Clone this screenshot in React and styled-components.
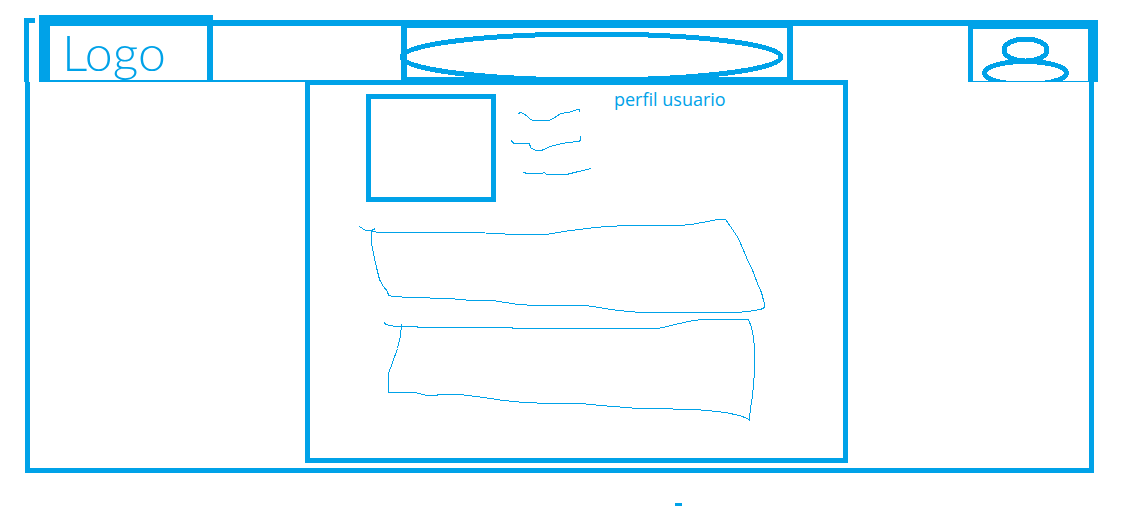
import React from "react";
import styled, { createGlobalStyle } from "styled-components";

const INK = "#00a2e8";

const GlobalStyle = createGlobalStyle`
  *, *::before, *::after { box-sizing: border-box; }
  body {
    margin: 0;
    background: #fff;
    color: ${INK};
    font-family: "Open Sans", "Noto Sans", sans-serif;
  }
`;

const Page = styled.div`
  padding: 15px 30px 0 24px;
`;

const TopRow = styled.div`
  display: flex;
  gap: 4px;
  height: 67px;
`;

const Corner = styled.div`
  width: 11px;
  margin-top: 3px;
  border: solid ${INK};
  border-width: 5px 0 0 5px;
`;

const Header = styled.header`
  flex: 1;
  display: grid;
  grid-template-columns: 174px 188fr 392fr 175fr 130px;
  align-items: start;
`;

const LogoLink = styled.a`
  display: block;
  height: 67px;
  padding-left: 12px;
  border: solid ${INK};
  border-width: 11px 6px 2px 11px;
  color: ${INK};
  font-family: Lato, sans-serif;
  font-size: 50px;
  font-weight: 300;
  line-height: 52px;
  text-decoration: none;
`;

const Rail = styled.div`
  height: 62px;
  margin-top: 5px;
  border: solid ${INK};
  border-width: 6px 0 ${(p) => (p.$underlined ? "2px" : "0")};
`;

const SearchBox = styled.form`
  height: 65px;
  margin-top: 5px;
  border: solid ${INK};
  border-width: 8px 6px;
  display: grid;
`;

const Oval = styled.svg`
  grid-area: 1 / 1;
  width: calc(100% + 3px);
  height: 50px;
  margin: 4px 0 0 -7px;
  overflow: visible;

  ellipse {
    rx: calc(50% - 2px);
    ry: 23px;
    fill: none;
    stroke: ${INK};
    stroke-width: 5px;
    shape-rendering: crispEdges;
  }
`;

const SearchInput = styled.input`
  grid-area: 1 / 1;
  min-width: 0;
  padding: 0 40px;
  border: 0;
  background: transparent;
  color: ${INK};
  font: inherit;
  outline: none;
  appearance: none;
`;

const UserButton = styled.button`
  height: 62px;
  margin-top: 5px;
  padding: 0;
  border: solid ${INK};
  border-width: 9px 10px 1px 5px;
  background: #fff;
  cursor: pointer;

  svg { display: block; }
`;

const Body = styled.div`
  display: grid;
  grid-template-columns: 275fr 543fr 241fr;
  margin: 0 4px 0 1px;
  padding-bottom: 5px;
  border: solid ${INK};
  border-width: 0 5px 5px;
`;

const Panel = styled.main`
  grid-column: 2;
  margin-top: -2px;
  padding: 9px 0 36px 48px;
  border: 5px solid ${INK};
`;

const Profile = styled.section`
  display: flex;
  padding-left: 8px;
  margin-bottom: 16px;
`;

const Avatar = styled.div`
  width: 130px;
  height: 108px;
  border: 5px solid ${INK};
`;

const Title = styled.h1`
  margin: 0 0 0 20px;
  font-size: 18px;
  font-weight: 400;
  line-height: 10px;
  white-space: nowrap;
`;

const Posts = styled.section`
  display: grid;
  gap: 4px;
`;

const Sketch = styled.svg`
  display: block;
  fill: none;
  stroke: ${INK};
  stroke-width: ${(p) => p.$pen || 1};
  shape-rendering: crispEdges;
`;

const Details = styled(Sketch)`
  margin: 6px 0 0 14px;
`;

const Footer = styled.footer`
  display: grid;
  grid-template-columns: 651fr 7px 416fr;
  margin-top: 30px;
`;

const Dash = styled.span`
  grid-column: 2;
  height: 3px;
  background: ${INK};
`;

export default function App() {
  return (
    <>
      <GlobalStyle />
      <Page>
        <TopRow>
          <Corner />
          <Header>
            <LogoLink href="#">Logo</LogoLink>
            <Rail $underlined />
            <SearchBox role="search">
              <Oval aria-hidden="true">
                <ellipse cx="50%" cy="50%" />
              </Oval>
              <SearchInput type="text" aria-label="Buscar" />
            </SearchBox>
            <Rail />
            <UserButton type="button" aria-label="Usuario">
              <Sketch $pen={5} width="115" height="52" viewBox="0 0 115 52">
                <ellipse cx="52.5" cy="21" rx="21.5" ry="11" />
                <ellipse cx="52.5" cy="44" rx="41" ry="11.5" />
              </Sketch>
            </UserButton>
          </Header>
        </TopRow>
        <Body>
          <Panel>
            <Profile>
              <Avatar />
              <Details width="84" height="80" viewBox="509.5 99.5 84 80" aria-hidden="true">
                <path d="M518 113L520 112L523 113L527 116L530 119L533 120H548L553 118L560 113L568 112L577 109L579 109V111" />
                <path d="M511 140L512 142L514 143H529L530 147L535 150H541L550 146L561 143L568 142L577 141L579 141L580 139V135" />
                <path d="M523 172L527 173H541L544 172L546 174H566L578 171L591 168" />
              </Details>
              <Title>perfil usuario</Title>
            </Profile>
            <Posts>
              <Sketch width="410" height="96" viewBox="357.5 217.5 410 96" aria-hidden="true">
                <path d="M359 226L365 230H371L375 228" />
                <path d="M371 231L379 232H465L504 233L505 234H546L563 231L579 229L595 227L607 226L627 225H678L691 224L712 220L717 219H725L730 226L738 238L746 257L753 272L757 283L761 292L763 300L764 303V307L760 309L748 311L735 312H641L628 311L610 309L593 306L583 305H535L518 304L492 300L471 300L449 298L409 297L393 296L388 295L387 291L383 286L379 279L376 267L373 253L371 243Z" />
              </Sketch>
              <Sketch width="410" height="104" viewBox="357.5 317.5 410 104" aria-hidden="true">
                <path d="M384 322L385 324L395 326H416L418 327H511L513 328H657L667 326L674 324L693 320L702 319H748L751 327L753 337L754 348V372L752 395L750 408L749 417V420L747 418L739 415L725 412L707 410L694 409H673L672 408H637L613 406L600 405L580 403H550L523 402L503 400L483 397L467 395L460 394H438L436 395H427L422 394L415 392H388V373L392 362L397 348L400 335L401 324H400" />
              </Sketch>
            </Posts>
          </Panel>
        </Body>
        <Footer>
          <Dash />
        </Footer>
      </Page>
    </>
  );
}
